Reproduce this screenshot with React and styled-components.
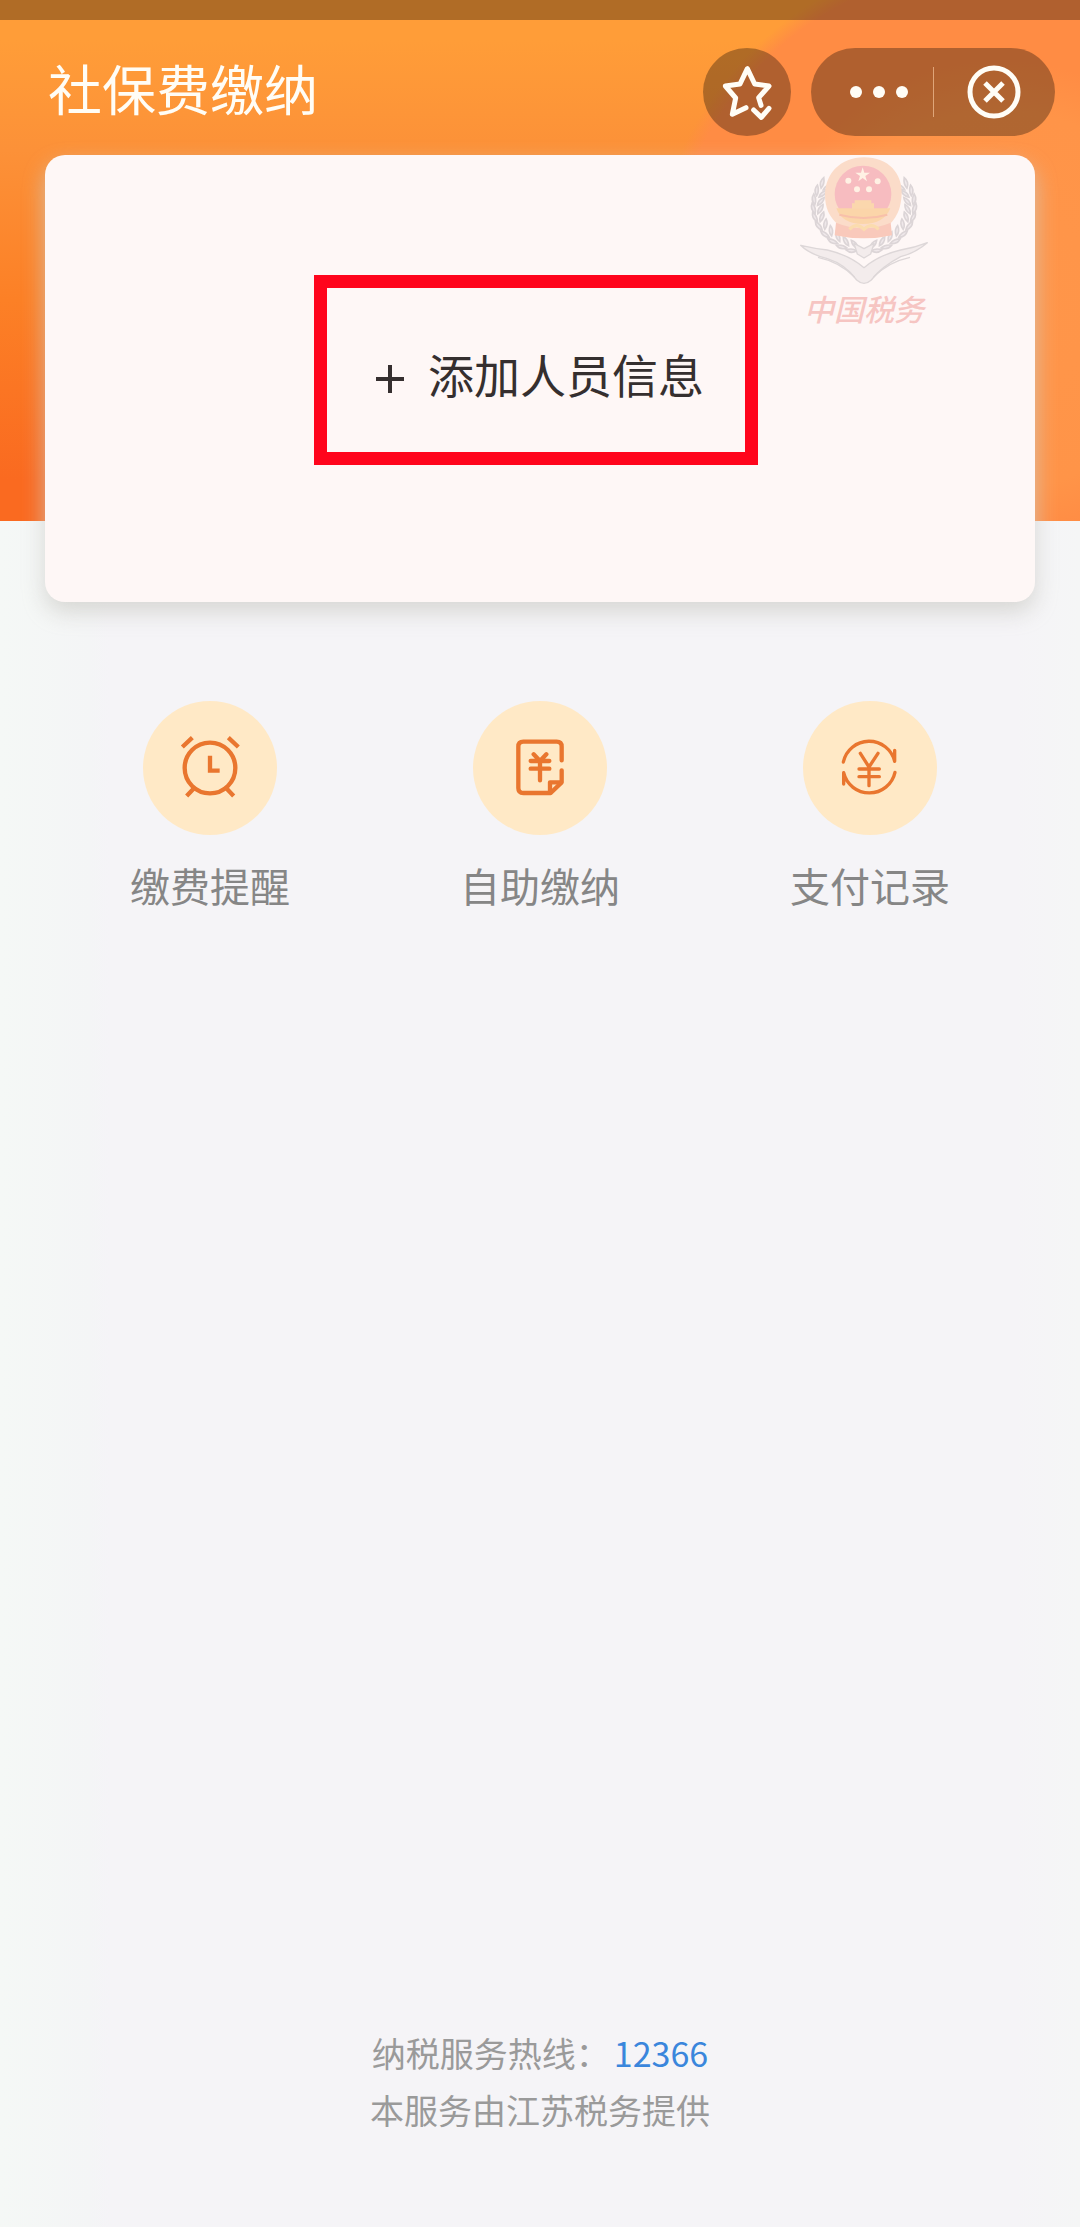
import styled, { createGlobalStyle } from "styled-components";

const COLORS = {
  text: "#352f2f",
  label: "#868686",
  footer: "#9a9a9a",
  link: "#3a86dc",
  icon: "#e9762f",
  iconBg: "#ffe9c6",
  card: "#fef7f6",
  mark: "#ff051c",
};

const GlobalStyle = createGlobalStyle`
  * {
    box-sizing: border-box;
  }

  body {
    margin: 0;
    font-family: "Noto Sans CJK SC", sans-serif;
  }

  button {
    padding: 0;
    border: none;
    background: none;
    font-family: inherit;
    cursor: pointer;
  }
`;

const StarIcon = () => (
  <svg width="88" height="88" viewBox="129 143 264 264" fill="none">
    <g stroke="#fffdf6" strokeWidth="15" strokeLinecap="round" strokeLinejoin="round">
      <path d="M303 315 L296 292 L327 257 L284 251 L262 205 L240 251 L196 257 L227 293 L217 342 L258 322" />
      <path d="M281 329 L304 351 L327 324" />
    </g>
  </svg>
);

const MoreIcon = () => (
  <svg width="58" height="12" viewBox="0 0 58 12" fill="#fffdf6">
    <circle cx="6" cy="6" r="6" />
    <circle cx="29" cy="6" r="6" />
    <circle cx="52" cy="6" r="6" />
  </svg>
);

const CloseIcon = () => (
  <svg width="54" height="54" viewBox="0 0 54 54" fill="none" stroke="#fffdf6">
    <circle cx="27" cy="27" r="24" strokeWidth="5" />
    <path d="M18 18 L36 36 M36 18 L18 36" strokeWidth="5" />
  </svg>
);

const ClockIcon = () => (
  <svg width="134" height="134" viewBox="71 66 402 402" fill="none">
    <g stroke={COLORS.icon} strokeWidth="13">
      <circle cx="272" cy="267" r="76" />
      <path d="M189 204 L219 176 M327 176 L357 204" />
      <path d="M224 328 L202 351 M321 328 L343 351" />
      <path d="M272 230 V275 H301" />
    </g>
  </svg>
);

const BillIcon = () => (
  <svg width="134" height="134" viewBox="69 66 402 402" fill="none">
    <g stroke={COLORS.icon} strokeWidth="13" strokeLinecap="round" strokeLinejoin="round">
      <path d="M335 244 V203 Q335 188 320 188 H220 Q205 188 205 203 V327 Q205 342 220 342 H302 L335 310 V274" />
      <path d="M300 340 V310 H333" />
      <path d="M251 226 L270 246 L289 226 M242 246 H298 M242 269 H298 M270 246 V304" />
    </g>
  </svg>
);

const RecordIcon = () => (
  <svg width="134" height="134" viewBox="67 66 402 402" fill="none">
    <g stroke={COLORS.icon} strokeWidth="10" strokeLinecap="round" strokeLinejoin="round">
      <path d="M188 249 A79 79 0 0 1 342 247 V214" />
      <path d="M343 280 A79 79 0 0 1 189 281 V315" />
      <path d="M239 223 L265 264 L292 223 M235 270 H296 M235 293 H296 M265 264 V320" />
    </g>
  </svg>
);

const WHEAT = [
  [128, 130, 25],
  [112, 152, 15],
  [104, 178, 5],
  [102, 204, -5],
  [106, 230, -15],
  [117, 256, -28],
  [135, 280, -42],
  [158, 301, -55],
  [184, 317, -65],
  [213, 328, -75],
];

const WheatEar = () => (
  <g fill="#efe8ea" stroke="#dcd5d7" strokeWidth="5">
    {WHEAT.map(([x, y, turn]) => (
      <g key={y} transform={`translate(${x} ${y}) rotate(${turn})`}>
        <path d="M0 16 Q-15 2 -6 -16 Q5 0 0 16 Z" />
        <path d="M8 18 Q8 0 26 -8 Q26 9 8 18 Z" />
      </g>
    ))}
  </g>
);

const Emblem = () => (
  <svg width="130" height="132" viewBox="55 48 390 396">
    <WheatEar />
    <g transform="translate(500 0) scale(-1 1)">
      <WheatEar />
    </g>
    <g fill="#f3ecec" stroke="#ddd7d8" strokeWidth="4" strokeLinejoin="round">
      <path d="M60 316 Q104 326 140 330 Q205 345 250 383 Q295 345 360 330 Q400 324 440 308 Q405 338 360 350 Q300 382 272 420 Q250 440 228 420 Q196 374 140 356 Q85 342 60 316 Z" />
      <path d="M112 352 Q178 366 222 412 M388 352 Q322 366 278 412" fill="none" />
      <path d="M220 310 L250 326 L280 310 L270 342 L250 354 L230 342 Z" />
    </g>
    <path
      d="M250 52 C325 52 365 102 363 162 C361 216 340 240 326 254 L332 284 Q290 298 250 290 Q210 298 166 284 L172 254 C148 232 132 206 133 160 C136 102 178 52 250 52 Z"
      fill="#fbdcc9"
    />
    <path d="M166 248 Q250 282 330 248 L334 286 Q250 304 162 286 Z" fill="#f9c9bb" />
    <circle cx="247" cy="162" r="85" fill="#f7bcc0" />
    <path d="M167 205 H329 Q310 252 247 252 Q184 252 167 205 Z" fill="#fbd5a9" />
    <path d="M214 206 V190 H222 V181 H272 V190 H280 V206 Z" fill="#fbd7ad" />
    <path d="M176 224 Q250 244 320 224" fill="none" stroke="#f8c0aa" strokeWidth="6" />
    <path d="M206 268 Q228 246 250 268 Q272 246 294 268" fill="none" stroke="#fbdcae" strokeWidth="9" />
    <g fill="#fff1e4">
      <path d="M246 82 L251 98 L268 98 L254 108 L259 124 L246 114 L233 124 L238 108 L224 98 L241 98 Z" />
      <circle cx="203" cy="122" r="9" />
      <circle cx="291" cy="124" r="9" />
      <circle cx="229" cy="148" r="9" />
      <circle cx="265" cy="148" r="9" />
    </g>
  </svg>
);

const MENUS = [
  { id: 1, name: "缴费提醒", icon: <ClockIcon /> },
  { id: 2, name: "自助缴纳", icon: <BillIcon /> },
  { id: 3, name: "支付记录", icon: <RecordIcon /> },
];

const App = () => {
  return (
    <Page>
      <GlobalStyle />
      <Hero>
        <StatusBar />
        <Header>
          <Title>社保费缴纳</Title>
          <Actions>
            <StarButton aria-label="收藏">
              <StarIcon />
            </StarButton>
            <Capsule>
              <CapsuleButton aria-label="更多">
                <MoreIcon />
              </CapsuleButton>
              <Divider />
              <CapsuleButton aria-label="关闭">
                <CloseIcon />
              </CapsuleButton>
            </Capsule>
          </Actions>
        </Header>
      </Hero>
      <Card>
        <Watermark>
          <Emblem />
          <WatermarkText>中国税务</WatermarkText>
        </Watermark>
        <AddButton>
          <PlusIcon viewBox="0 0 28 28">
            <path d="M0 14 H28 M14 0 V28" />
          </PlusIcon>
          添加人员信息
        </AddButton>
        <Highlight />
      </Card>
      <Menus>
        {MENUS.map((menu) => (
          <Menu key={menu.id}>
            <MenuIcon>{menu.icon}</MenuIcon>
            {menu.name}
          </Menu>
        ))}
      </Menus>
      <Footer>
        <Line>
          纳税服务热线：<Hotline href="tel:12366">12366</Hotline>
        </Line>
        <Line>本服务由江苏税务提供</Line>
      </Footer>
    </Page>
  );
};

const Page = styled.main`
  min-height: 100vh;

  display: flex;
  flex-direction: column;

  background: linear-gradient(90deg, #f5f8f6 0, #f4f5f6 90px, #f5f4f7 110px, #f5f4f7 94%, #f5f6f6 100%);
`;

const Hero = styled.div`
  height: 521px;

  background:
    radial-gradient(
      circle at calc(100% - 80px) 300px,
      #ff964a 0,
      #ff9448 190px,
      #ff8c44 240px,
      #ff8c44 335px,
      rgba(255, 140, 68, 0) 352px
    ),
    linear-gradient(90deg, rgba(255, 148, 70, 0) 60%, #ff9446 90%) 0 160px no-repeat,
    linear-gradient(180deg, #ff9d38 0, #ff9d38 40px, #fc9138 150px, #fc8026 300px, #fa6a20 480px, #fa6a20 100%);
`;

const StatusBar = styled.div`
  height: 20px;

  background: rgba(0, 0, 0, 0.31);
`;

const Header = styled.header`
  height: 135px;
  padding: 28px 25px 0 48px;

  display: flex;
  align-items: flex-start;
  justify-content: space-between;
`;

const Title = styled.h1`
  margin: 0;

  color: #fffdf6;
  font-size: 54px;
  font-weight: 400;
  line-height: 80px;
`;

const Actions = styled.div`
  display: flex;
  gap: 20px;
`;

const StarButton = styled.button`
  width: 88px;
  height: 88px;

  display: flex;

  border-radius: 50%;
  background: rgba(0, 0, 0, 0.31);
`;

const Capsule = styled.div`
  width: 244px;
  height: 88px;

  display: flex;
  align-items: center;

  border-radius: 44px;
  background: rgba(0, 0, 0, 0.31);
`;

const CapsuleButton = styled.button`
  width: 50%;
  height: 88px;

  display: flex;
  align-items: center;
  justify-content: center;

  &:first-child {
    padding-left: 14px;
  }
`;

const Divider = styled.span`
  width: 1px;
  height: 50px;

  flex-shrink: 0;

  background: rgba(255, 210, 170, 0.6);
`;

const Card = styled.section`
  position: relative;
  height: 447px;
  margin: -366px 45px 0;
  padding-bottom: 12px;

  display: flex;
  align-items: center;
  justify-content: center;

  border-radius: 20px;
  background: ${COLORS.card};
  box-shadow: 0 10px 22px rgba(205, 205, 200, 0.75);
`;

const Watermark = styled.div`
  position: absolute;
  top: 1px;
  right: 106px;

  display: flex;
  flex-direction: column;
  align-items: center;
`;

const WatermarkText = styled.span`
  color: #f6c5c2;
  font-size: 30px;
  font-style: italic;
  font-weight: 500;
  line-height: 40px;
`;

const AddButton = styled.button`
  display: flex;
  align-items: center;
  gap: 24px;

  color: ${COLORS.text};
  font-size: 46px;
  line-height: 64px;
`;

const PlusIcon = styled.svg`
  width: 28px;
  height: 28px;
  margin-top: 12px;

  stroke: ${COLORS.text};
  stroke-width: 4;
`;

const Highlight = styled.div`
  position: absolute;
  top: 120px;
  left: calc(50% - 226px);
  width: 444px;
  height: 190px;

  border: 13px solid ${COLORS.mark};
  pointer-events: none;
`;

const Menus = styled.nav`
  margin: 99px 45px 0;

  display: grid;
  grid-template-columns: repeat(3, 1fr);
`;

const Menu = styled.button`
  display: flex;
  flex-direction: column;
  align-items: center;
  gap: 22px;

  color: ${COLORS.label};
  font-size: 40px;
  line-height: 56px;
`;

const MenuIcon = styled.span`
  width: 134px;
  height: 134px;

  display: flex;

  border-radius: 50%;
  background: ${COLORS.iconBg};
`;

const Footer = styled.footer`
  margin-top: auto;
  padding-bottom: 89px;

  color: ${COLORS.footer};
  text-align: center;
`;

const Line = styled.p`
  margin: 0;

  font-size: 34px;
  line-height: 57px;
`;

const Hotline = styled.a`
  margin-left: 4px;

  color: ${COLORS.link};
  text-decoration: none;
`;

export default App;
